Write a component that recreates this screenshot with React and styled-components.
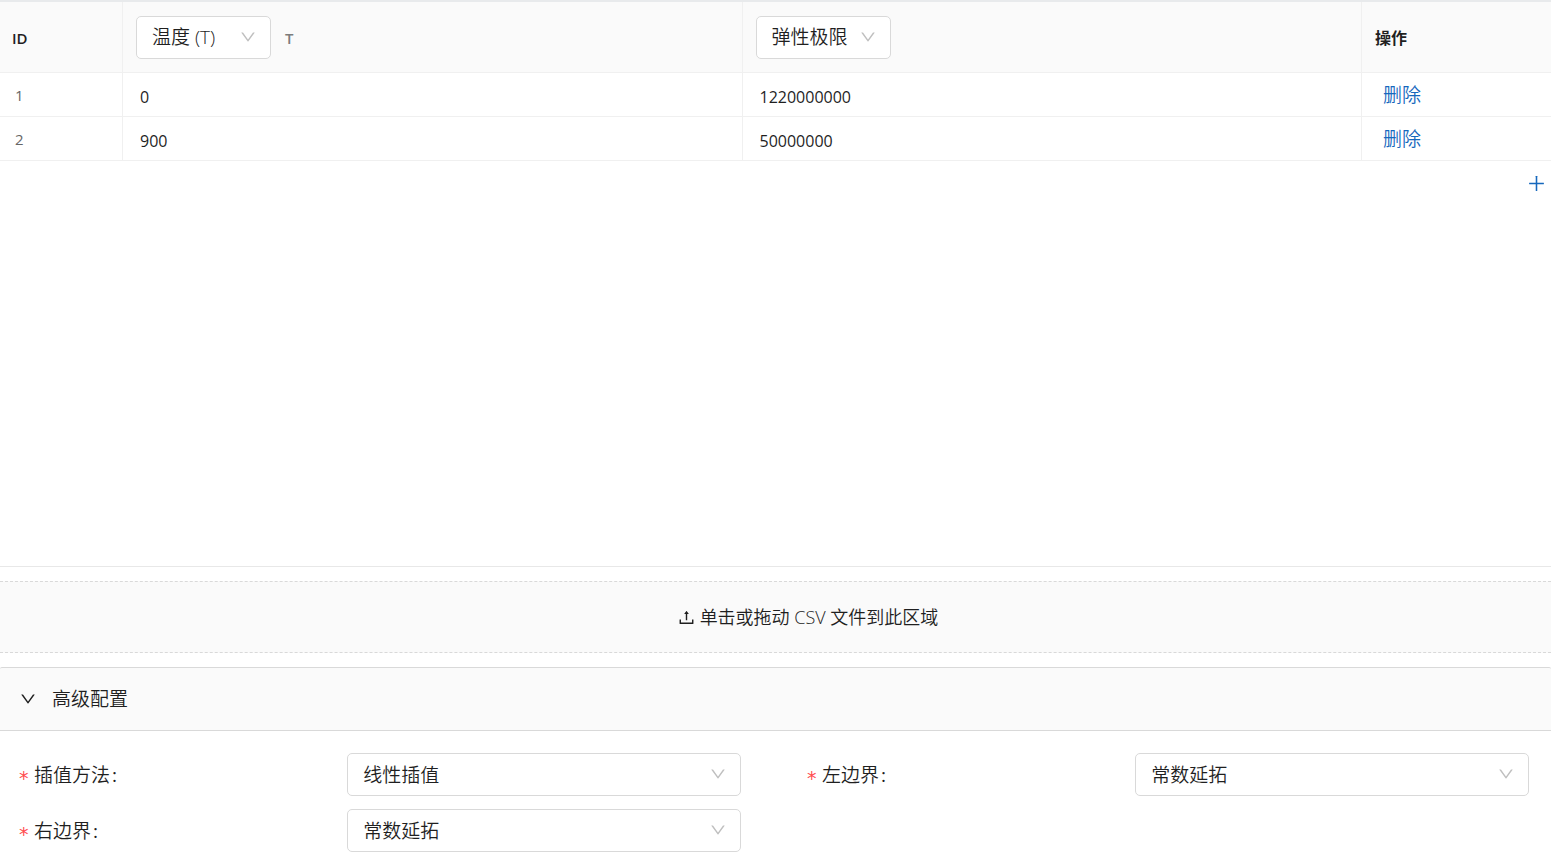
import { useState } from 'react'
import styled, { createGlobalStyle } from 'styled-components'
import { AiOutlineDown, AiOutlinePlus, AiOutlineUpload } from 'react-icons/ai'

const GlobalStyle = createGlobalStyle`
  * {
    box-sizing: border-box;
  }
  body {
    margin: 0;
    color: #1f1f1f;
    background-color: #fff;
    font-family: 'Open Sans', 'Noto Sans CJK SC', sans-serif;
    font-size: 19px;
    font-weight: 350;
    line-height: 28px;
  }
  button, select, input {
    font: inherit;
    color: inherit;
  }
`
const Page = styled.main`
  display: flex;
  flex-direction: column;
  min-height: 100vh;
`
const TableArea = styled.section`
  flex: 1;
  border-top: 2px solid #e8eaec;
  border-bottom: 1px solid #e8e8e8;
`
const Table = styled.table`
  width: 100%;
  table-layout: fixed;
  border-collapse: separate;
  border-spacing: 0;
`
const HeadCell = styled.th`
  width: ${(props) => props.$width || 'auto'};
  height: 71px;
  padding: ${(props) => (props.$text ? '2px 12px 0' : '0 13px')};
  text-align: left;
  font-size: ${(props) => (props.$small ? '15px' : '16px')};
  font-weight: 600;
  background-color: #fafafa;
  border-bottom: 1px solid #f0f0f0;
  border-right: 1px solid #f0f0f0;
  &:last-child {
    padding: 2px 13px 0;
    border-right: none;
  }
`
const HeadContent = styled.div`
  display: flex;
  align-items: center;
  gap: 14px;
`
const Unit = styled.span`
  padding-top: 2px;
  color: #7c7c7c;
  font-size: 15px;
`
const Cell = styled.td`
  height: 44px;
  padding: 4px 17px 0;
  font-size: 16px;
  font-weight: 400;
  border-bottom: 1px solid #f0f0f0;
  border-right: 1px solid #f0f0f0;
  &:last-child {
    padding: 1px 21px 0;
    border-right: none;
  }
`
const IdCell = styled(Cell)`
  padding: 1px 15px 0;
  color: #666;
  font-size: 15px;
`
const LinkButton = styled.button`
  display: block;
  padding: 0;
  border: none;
  background: none;
  color: #1668bd;
  font-size: 19px;
  font-weight: 350;
  cursor: pointer;
`
const AddRow = styled.div`
  display: flex;
  justify-content: flex-end;
  padding: 12px 4px;
`
const AddButton = styled(LinkButton)`
  display: flex;
`
const SelectBox = styled.div`
  position: relative;
  width: ${(props) => props.$width || '100%'};
  svg {
    position: absolute;
    top: 12px;
    right: 14px;
    color: #bfbfbf;
    pointer-events: none;
  }
`
const StyledSelect = styled.select`
  display: block;
  width: 100%;
  height: 43px;
  padding: 0 36px 0 15px;
  appearance: none;
  border: 1px solid #d9d9d9;
  border-radius: 5px;
  background-color: #fff;
  font-size: 19px;
  font-weight: 350;
`
const UploadArea = styled.label`
  display: flex;
  align-items: center;
  justify-content: center;
  gap: 4px;
  height: 72px;
  margin: 14px 0;
  padding-left: 64px;
  border: dashed #d9d9d9;
  border-width: 1px 0;
  background-color: #fafafa;
  font-size: 18px;
  cursor: pointer;
`
const FileInput = styled.input`
  display: none;
`
const PanelHeader = styled.button`
  display: flex;
  align-items: center;
  gap: 15px;
  height: 64px;
  padding: 0 19px;
  border: solid #d9d9d9;
  border-width: 1px 0;
  border-radius: 2px 2px 0 0;
  background-color: #fafafa;
  text-align: left;
  cursor: pointer;
`
const Form = styled.form`
  display: grid;
  grid-template-columns: 1fr 1fr;
  gap: 13px 66px;
  padding: 22px 22px 13px 19px;
`
const Field = styled.div`
  display: grid;
  grid-template-columns: 5fr 6fr;
  align-items: center;
`
const FieldLabel = styled.label`
  display: flex;
  align-items: center;
  &::before {
    content: '*';
    width: 15px;
    padding-top: 6px;
    color: #ff4d4f;
    font-family: 'DejaVu Sans', sans-serif;
    font-weight: 400;
  }
  &::after {
    content: ':';
    margin-left: 2px;
    font-weight: 400;
  }
`

const fields = [
  { id: 'method', label: '插值方法', options: ['线性插值'] },
  { id: 'left', label: '左边界', options: ['常数延拓'] },
  { id: 'right', label: '右边界', options: ['常数延拓'] },
]

function Select({ id, label, options, width }) {
  return (
    <SelectBox $width={width}>
      <StyledSelect id={id} aria-label={label}>
        {options.map((option) => (
          <option key={option}>{option}</option>
        ))}
      </StyledSelect>
      <AiOutlineDown size={18} />
    </SelectBox>
  )
}

function DataTable() {
  const [rows, setRows] = useState([
    { id: 1, x: '0', y: '1220000000' },
    { id: 2, x: '900', y: '50000000' },
  ])
  const nextId = Math.max(0, ...rows.map((row) => row.id)) + 1

  return (
    <TableArea>
      <Table>
        <thead>
          <tr>
            <HeadCell $width='123px' $small $text>
              ID
            </HeadCell>
            <HeadCell>
              <HeadContent>
                <Select label='自变量' options={['温度 (T)']} width='135px' />
                <Unit>T</Unit>
              </HeadContent>
            </HeadCell>
            <HeadCell>
              <Select label='因变量' options={['弹性极限']} width='135px' />
            </HeadCell>
            <HeadCell $width='189px'>操作</HeadCell>
          </tr>
        </thead>
        <tbody>
          {rows.map((row) => (
            <tr key={row.id}>
              <IdCell>{row.id}</IdCell>
              <Cell>{row.x}</Cell>
              <Cell>{row.y}</Cell>
              <Cell>
                <LinkButton
                  onClick={() => setRows(rows.filter((r) => r.id !== row.id))}
                >
                  删除
                </LinkButton>
              </Cell>
            </tr>
          ))}
        </tbody>
      </Table>
      <AddRow>
        <AddButton
          aria-label='添加'
          onClick={() => setRows([...rows, { id: nextId, x: '0', y: '0' }])}
        >
          <AiOutlinePlus size={21} />
        </AddButton>
      </AddRow>
    </TableArea>
  )
}

function App() {
  const [open, setOpen] = useState(true)

  return (
    <Page>
      <GlobalStyle />
      <DataTable />
      <UploadArea>
        <FileInput type='file' accept='.csv' />
        <AiOutlineUpload size={19} />
        <span>单击或拖动 CSV 文件到此区域</span>
      </UploadArea>
      <PanelHeader aria-expanded={open} onClick={() => setOpen(!open)}>
        <AiOutlineDown size={18} />
        高级配置
      </PanelHeader>
      {open && (
        <Form>
          {fields.map((field) => (
            <Field key={field.id}>
              <FieldLabel htmlFor={field.id}>{field.label}</FieldLabel>
              <Select id={field.id} label={field.label} options={field.options} />
            </Field>
          ))}
        </Form>
      )}
    </Page>
  )
}

export default App
